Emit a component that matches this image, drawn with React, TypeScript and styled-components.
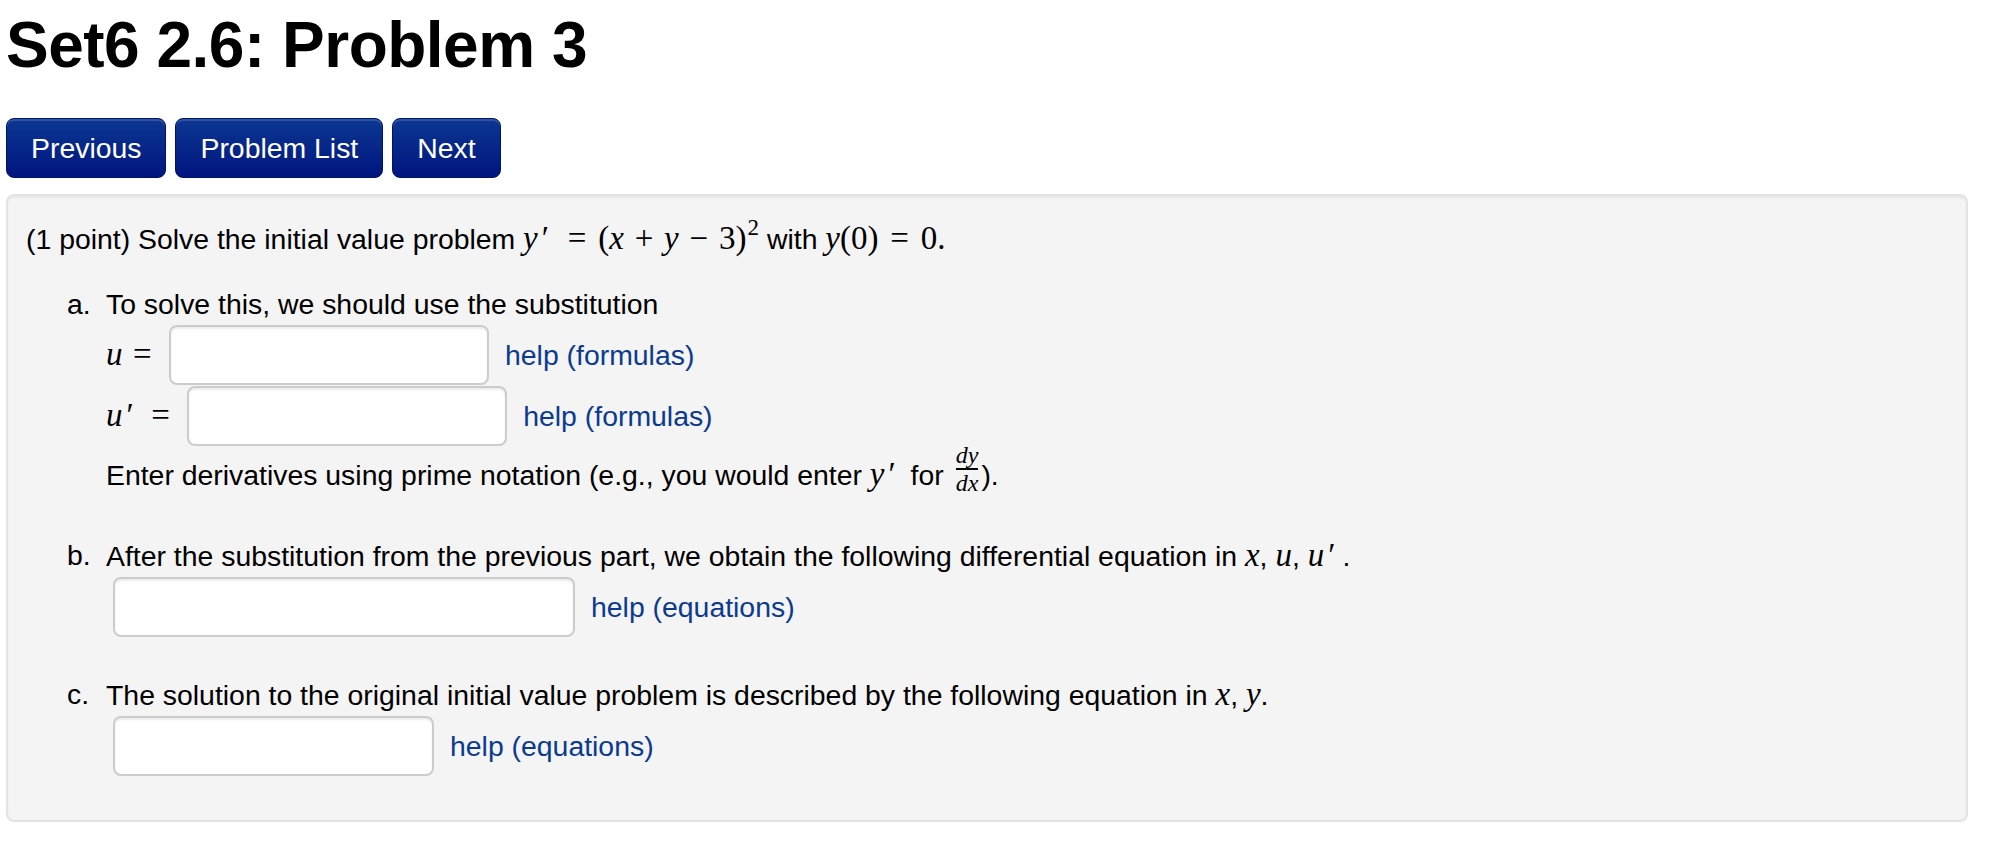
import React from 'react'
import styled, { createGlobalStyle } from 'styled-components'

const GlobalStyle = createGlobalStyle`
  html, body {
    margin: 0;
    padding: 0;
    background: #ffffff;
  }
  body {
    font-family: 'Liberation Sans', Arial, Helvetica, sans-serif;
    font-size: 28.4px;
    color: #000;
  }
`

const Page = styled.div`
  padding: 0 22px 0 6px;
`

const Title = styled.h1`
  margin: 0;
  padding-top: 5px;
  font-size: 64px;
  line-height: 80px;
  font-weight: 700;
  letter-spacing: -0.5px;
`

const Nav = styled.nav`
  display: flex;
  gap: 9px;
  margin-top: 33px;
`

const NavButton = styled.a`
  display: inline-block;
  box-sizing: border-box;
  height: 60px;
  padding: 0 24px;
  line-height: 58px;
  border: 1px solid #001466;
  border-radius: 8px;
  background: linear-gradient(#0c3792, #00157f);
  box-shadow: inset 0 2px 0 rgba(255, 255, 255, 0.15);
  color: #fff;
  font-size: 28.4px;
  text-decoration: none;
`

const Well = styled.div`
  margin-top: 16px;
  background: #f4f4f4;
  border: 2px solid #e3e3e3;
  border-radius: 8px;
  box-shadow: inset 0 2px 2px rgba(0, 0, 0, 0.05);
  padding: 22px 18px 44px;
`

const Line = styled.div<{ $top?: number }>`
  line-height: 40px;
  margin-top: ${p => p.$top ?? 0}px;
`

/* math pieces, spaced roughly like TeX metrics */
const Var = styled.span`
  font-family: 'Liberation Serif', 'Times New Roman', serif;
  font-style: italic;
  font-size: 33px;
`

const Num = styled.span`
  font-family: 'Liberation Serif', 'Times New Roman', serif;
  font-size: 33px;
`

const Op = styled.span<{ $space?: number }>`
  display: inline-block;
  width: 0.778em;
  text-align: center;
  font-family: 'Liberation Serif', 'Times New Roman', serif;
  font-size: 33px;
  margin: 0 ${p => p.$space ?? 0.25}em;
`

const Prime = styled.span`
  font-family: 'Liberation Serif', 'Times New Roman', serif;
  font-size: 33px;
  margin: 0 7px 0 4px;
`

const Sup = styled.sup`
  font-family: 'Liberation Serif', 'Times New Roman', serif;
  font-size: 23px;
  line-height: 0;
  vertical-align: 14px;
  margin-left: 1px;
`

const Frac = styled.span`
  display: inline-flex;
  flex-direction: column;
  align-items: center;
  vertical-align: 22px;
  margin: -14px 3px -4px 12px;
  font-family: 'Liberation Serif', 'Times New Roman', serif;
  font-style: italic;
  font-size: 24px;
  line-height: 26px;
`

const FracBar = styled.span`
  align-self: stretch;
  height: 1.5px;
  background: #000;
`

const Parts = styled.ol`
  list-style: none;
  margin: 25px 0 0 41px;
  padding: 0;
`

const Part = styled.li<{ $top?: number }>`
  display: grid;
  grid-template-columns: 39px 1fr;
  margin-top: ${p => p.$top ?? 0}px;
`

const Marker = styled.span`
  line-height: 40px;
`

const AnswerRow = styled.div`
  display: flex;
  align-items: center;
  height: 61px;
`

const AnswerBox = styled.input<{ $width: number }>`
  box-sizing: border-box;
  width: ${p => p.$width}px;
  height: 60px;
  margin: 0 16px 0 7px;
  padding: 8px 12px;
  border: 2px solid #cccccc;
  border-radius: 8px;
  background: #fff;
  box-shadow: inset 0 2px 2px rgba(0, 0, 0, 0.075);
  font-size: 28px;
  font-family: inherit;
`

const HelpLink = styled.a`
  color: #0b3a8f;
  text-decoration: none;
  font-size: 28.4px;
  line-height: 40px;
`

const App = () => {
  return (
    <Page>
      <GlobalStyle />
      <Title>Set6 2.6: Problem 3</Title>

      <Nav>
        <NavButton href="#">Previous</NavButton>
        <NavButton href="#">Problem List</NavButton>
        <NavButton href="#">Next</NavButton>
      </Nav>

      <Well>
        <Line>
          (1 point) Solve the initial value problem <Var>y</Var>
          <Prime>′</Prime>
          <Op>=</Op>
          <Num>(</Num>
          <Var>x</Var>
          <Op $space={0.222}>+</Op>
          <Var>y</Var>
          <Op $space={0.222}>−</Op>
          <Num>3)</Num>
          <Sup>2</Sup> with <Var>y</Var>
          <Num>(0)</Num>
          <Op>=</Op>
          <Num>0.</Num>
        </Line>

        <Parts>
          <Part>
            <Marker>a.</Marker>
            <div>
              <Line>To solve this, we should use the substitution</Line>
              <AnswerRow>
                <Var>u</Var>
                <Op $space={0.21}>=</Op>
                <AnswerBox $width={320} />
                <HelpLink href="#">help (formulas)</HelpLink>
              </AnswerRow>
              <AnswerRow>
                <Var>u</Var>
                <Prime>′</Prime>
                <Op $space={0.21}>=</Op>
                <AnswerBox $width={320} />
                <HelpLink href="#">help (formulas)</HelpLink>
              </AnswerRow>
              <Line $top={8}>
                Enter derivatives using prime notation (e.g., you would enter <Var>y</Var>
                <Prime>′</Prime> for
                <Frac>
                  <span>dy</span>
                  <FracBar />
                  <span>dx</span>
                </Frac>
                ).
              </Line>
            </div>
          </Part>

          <Part $top={40}>
            <Marker>b.</Marker>
            <div>
              <Line>
                After the substitution from the previous part, we obtain the following differential
                equation in <Var>x</Var>, <Var>u</Var>, <Var>u</Var>
                <Prime>′</Prime>.
              </Line>
              <AnswerRow>
                <AnswerBox $width={462} />
                <HelpLink href="#">help (equations)</HelpLink>
              </AnswerRow>
            </div>
          </Part>

          <Part $top={37}>
            <Marker>c.</Marker>
            <div>
              <Line>
                The solution to the original initial value problem is described by the following
                equation in <Var>x</Var>, <Var>y</Var>.
              </Line>
              <AnswerRow>
                <AnswerBox $width={321} />
                <HelpLink href="#">help (equations)</HelpLink>
              </AnswerRow>
            </div>
          </Part>
        </Parts>
      </Well>
    </Page>
  )
}

export default App
